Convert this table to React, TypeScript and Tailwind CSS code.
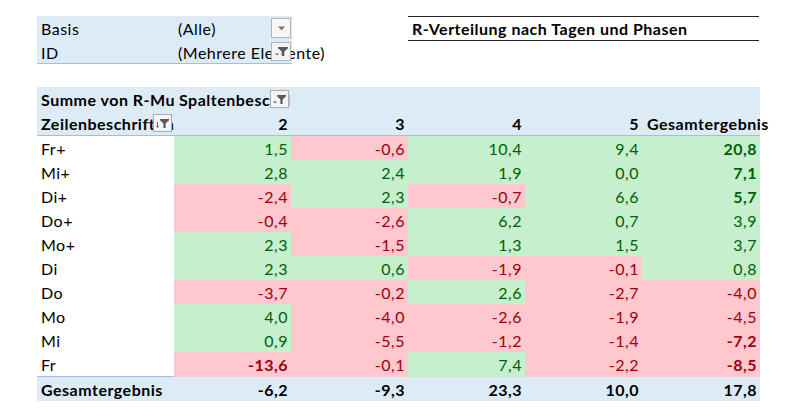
import React from "react";

type Tone = "g" | "r";
type Cell = [string, Tone, boolean?];

const rows: [string, Cell[]][] = [
  ["Fr+", [["1,5", "g"], ["-0,6", "r"], ["10,4", "g"], ["9,4", "g"], ["20,8", "g", true]]],
  ["Mi+", [["2,8", "g"], ["2,4", "g"], ["1,9", "g"], ["0,0", "g"], ["7,1", "g", true]]],
  ["Di+", [["-2,4", "r"], ["2,3", "g"], ["-0,7", "r"], ["6,6", "g"], ["5,7", "g", true]]],
  ["Do+", [["-0,4", "r"], ["-2,6", "r"], ["6,2", "g"], ["0,7", "g"], ["3,9", "g"]]],
  ["Mo+", [["2,3", "g"], ["-1,5", "r"], ["1,3", "g"], ["1,5", "g"], ["3,7", "g"]]],
  ["Di", [["2,3", "g"], ["0,6", "g"], ["-1,9", "r"], ["-0,1", "r"], ["0,8", "g"]]],
  ["Do", [["-3,7", "r"], ["-0,2", "r"], ["2,6", "g"], ["-2,7", "r"], ["-4,0", "r"]]],
  ["Mo", [["4,0", "g"], ["-4,0", "r"], ["-2,6", "r"], ["-1,9", "r"], ["-4,5", "r"]]],
  ["Mi", [["0,9", "g"], ["-5,5", "r"], ["-1,2", "r"], ["-1,4", "r"], ["-7,2", "r", true]]],
  ["Fr", [["-13,6", "r", true], ["-0,1", "r"], ["7,4", "g"], ["-2,2", "r"], ["-8,5", "r", true]]],
];

const toneClass: Record<Tone, string> = {
  g: "bg-[#C6EFCE] text-[#006100]",
  r: "bg-[#FFC7CE] text-[#9C0006]",
};

const GRID = "grid grid-cols-[137px_117px_117px_117px_117px_118px]";

function FunnelButton({ sort }: { sort?: boolean }) {
  return (
    <div className="absolute right-[2px] top-[3px] z-10 flex h-[18px] w-[19px] items-center justify-center border border-[#ababab] bg-[#f4f4f4] tracking-normal">
      <svg width="15" height="13" viewBox="0 0 15 13">
        {sort ? (
          <>
            <path d="M2.5 5v5" stroke="#666" strokeWidth="1" />
            <path d="M1 9h3l-1.5 2z" fill="#666" />
          </>
        ) : (
          <path d="M1 8.5h4l-2 2z" fill="#666" />
        )}
        <path d="M5 2h9v1.2L10.6 6.5V11H8.4V6.5L5 3.2z" fill="#595959" />
      </svg>
    </div>
  );
}

function ArrowButton() {
  return (
    <div className="absolute right-[1px] top-[2px] z-10 flex h-[20px] w-[20px] items-center justify-center border border-[#b3b3b3] bg-[#f7f7f7]">
      <svg width="9" height="5" viewBox="0 0 9 5">
        <path d="M1 0.5h7L4.5 4.5z" fill="#777" />
      </svg>
    </div>
  );
}

export default function App() {
  return (
    <div className="relative h-[420px] w-[800px] overflow-hidden bg-white pl-[37px] pt-[16px] font-['Lato',sans-serif] text-[16px] tracking-[0.5px] text-black">
      {/* Top area */}
      <div className="flex">
        <div className="w-[255px] border-b border-[#9BC2E6] bg-[#DDEBF7]">
          <div className="flex h-[24px] leading-[24px]">
            <div className="w-[137px] pl-[4px] pt-[1px]">Basis</div>
            <div className="relative w-[118px] pl-[4px] pt-[1px]">
              (Alle)
              <ArrowButton />
            </div>
          </div>
          <div className="flex h-[23px] leading-[24px]">
            <div className="w-[137px] pl-[4px] pt-[1px]">ID</div>
            <div className="relative w-[118px] whitespace-nowrap pl-[4px] pt-[1px]">
              (Mehrere Elemente)
              <div className="absolute right-[1px] top-[2px] z-10 flex h-[19px] w-[20px] items-center justify-center border border-[#b3b3b3] bg-[#f4f4f4]">
                <svg width="15" height="13" viewBox="0 0 15 13">
                  <path d="M1 8.5h4l-2 2z" fill="#666" />
                  <path d="M4 2h10v1.2L10.3 6.5V11H7.7V6.5L4 3.2z" fill="#595959" />
                </svg>
              </div>
            </div>
          </div>
        </div>
        <div className="ml-[116px] h-[25px] w-[351px] border-y border-[#222] pl-[4px] pt-[1px] font-bold leading-[22px]">
          R-Verteilung nach Tagen und Phasen
        </div>
      </div>

      {/* Pivot */}
      <div className="mt-[23px] w-[723px]">
        <div className="border-b border-[#9BC2E6] bg-[#DDEBF7] font-bold">
          <div className={`${GRID} h-[24px] leading-[24px]`}>
            <div className="overflow-hidden whitespace-nowrap pl-[4px] pt-[1px]">Summe von R-Multiple</div>
            <div className="relative overflow-hidden whitespace-nowrap pl-[5px] pt-[1px]">
              Spaltenbeschriftungen
              <FunnelButton />
            </div>
            <div />
            <div />
            <div />
            <div />
          </div>
          <div className={`${GRID} h-[24px] leading-[24px]`}>
            <div className="relative overflow-hidden whitespace-nowrap pl-[4px] pt-[1px]">
              Zeilenbeschriftungen
              <FunnelButton sort />
            </div>
            <div className="pr-[3px] pt-[1px] text-right">2</div>
            <div className="pr-[3px] pt-[1px] text-right">3</div>
            <div className="pr-[3px] pt-[1px] text-right">4</div>
            <div className="pr-[3px] pt-[1px] text-right">5</div>
            <div className="whitespace-nowrap pl-[5px] pt-[1px]">Gesamtergebnis</div>
          </div>
        </div>

        {rows.map(([label, cells]) => (
          <div key={label} className={`${GRID} h-[24px] leading-[24px]`}>
            <div className="pl-[4px] pt-[1px]">{label}</div>
            {cells.map(([v, t, b], i) => (
              <div
                key={i}
                className={`${toneClass[t]} pr-[3px] pt-[1px] text-right ${b ? "font-bold" : ""}`}
              >
                {v}
              </div>
            ))}
          </div>
        ))}

        <div className={`${GRID} h-[25px] border-t border-[#9BC2E6] bg-[#DDEBF7] font-bold leading-[24px]`}>
          <div className="pl-[4px] pt-[1px]">Gesamtergebnis</div>
          <div className="pr-[3px] pt-[1px] text-right">-6,2</div>
          <div className="pr-[3px] pt-[1px] text-right">-9,3</div>
          <div className="pr-[3px] pt-[1px] text-right">23,3</div>
          <div className="pr-[3px] pt-[1px] text-right">10,0</div>
          <div className="pr-[3px] pt-[1px] text-right">17,8</div>
        </div>
      </div>
    </div>
  );
}
